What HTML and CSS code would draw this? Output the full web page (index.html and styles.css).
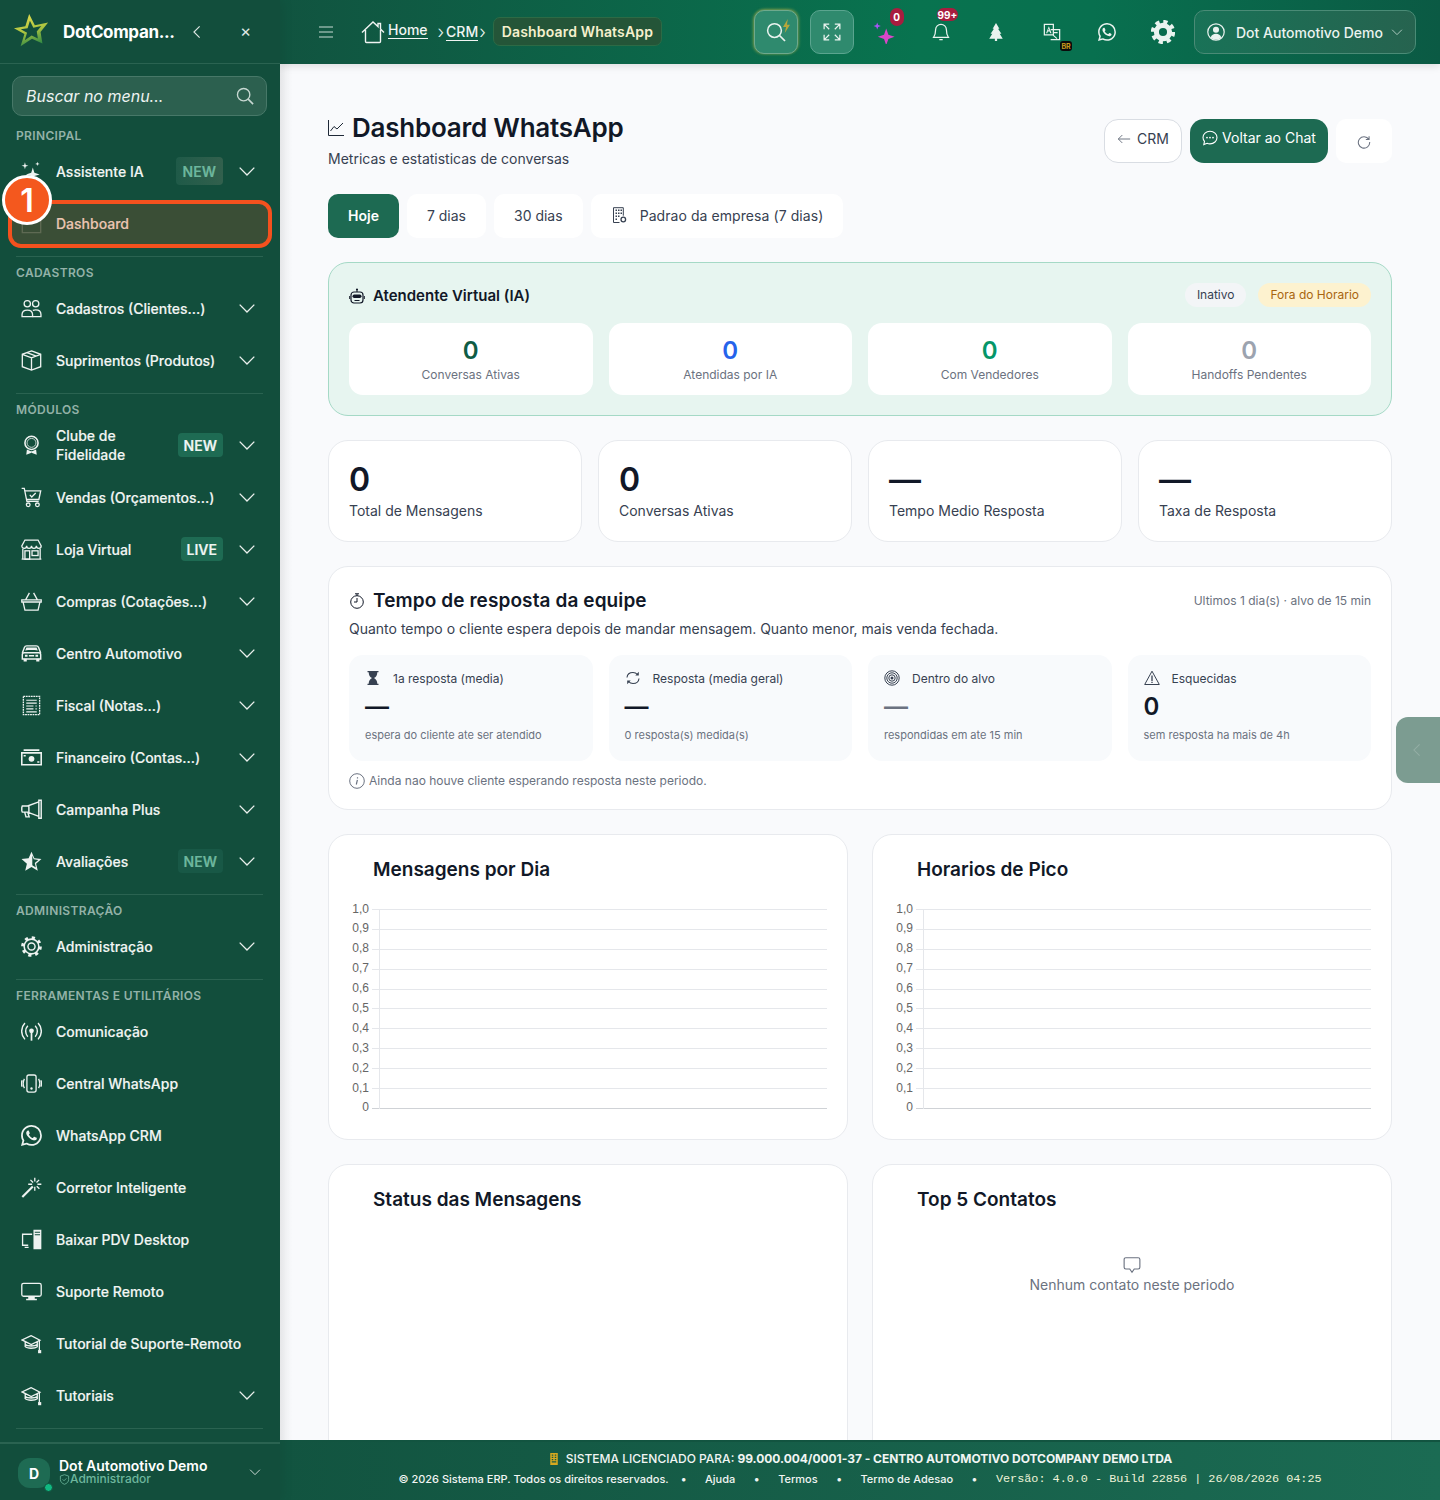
FILE: index.html
```html
<!DOCTYPE html>
<html lang="pt-BR">
<head>
<meta charset="utf-8">
<title>Dashboard WhatsApp</title>
<link rel="stylesheet" href="styles.css">
</head>
<body>
<svg class="defs" width="0" height="0" aria-hidden="true">
  <defs>
    <symbol id="chev" viewBox="0 0 16 16"><path d="M1.500 5l6.500 6.500L14.500 5" fill="none" stroke="currentColor" stroke-width="1.200"/></symbol>
    <symbol id="wa" viewBox="0 0 16 16"><path fill="currentColor" d="M13.601 2.326A7.85 7.85 0 0 0 7.994 0C3.627 0 .068 3.558.064 7.926c0 1.399.366 2.76 1.057 3.965L0 16l4.204-1.102a7.9 7.9 0 0 0 3.79.965h.004c4.368 0 7.926-3.558 7.93-7.93A7.9 7.9 0 0 0 13.6 2.326zM7.994 14.521a6.6 6.6 0 0 1-3.356-.92l-.24-.144-2.494.654.666-2.433-.156-.251a6.56 6.56 0 0 1-1.007-3.505c0-3.626 2.957-6.584 6.591-6.584a6.56 6.56 0 0 1 4.66 1.931 6.56 6.56 0 0 1 1.928 4.66c-.004 3.639-2.961 6.592-6.592 6.592m3.615-4.934c-.197-.099-1.17-.578-1.353-.646-.182-.065-.315-.099-.445.099-.133.197-.513.646-.627.775-.114.133-.232.148-.43.05-.197-.1-.836-.308-1.592-.985-.59-.525-.985-1.175-1.103-1.372-.114-.198-.011-.304.088-.403.087-.088.197-.232.296-.346.1-.114.133-.198.198-.33.065-.134.034-.248-.015-.347-.05-.099-.445-1.076-.612-1.47-.16-.389-.323-.335-.445-.34-.114-.007-.247-.007-.38-.007a.73.73 0 0 0-.529.247c-.182.198-.691.677-.691 1.654s.71 1.916.81 2.049c.098.133 1.394 2.132 3.383 2.992.47.205.84.326 1.129.418.475.152.904.129 1.246.08.38-.058 1.171-.48 1.338-.943.164-.464.164-.86.114-.943-.049-.084-.182-.133-.38-.232"/></symbol>
    <symbol id="people" viewBox="0 0 16 16"><g fill="none" stroke="currentColor" stroke-width="1"><circle cx="4.800" cy="4.400" r="2.400"/><circle cx="11.200" cy="4.400" r="2.400"/><path d="M.8 14.200v-1.600c0-2 1.600-3.400 4-3.400s4 1.400 4 3.400v1.600z"/><path d="M9 9.400c.6-.2 1.300-.3 2.200-.3 2.400 0 4 1.400 4 3.500v1.600H8.800"/></g></symbol>
    <symbol id="box" viewBox="0 0 16 16"><g fill="none" stroke="currentColor" stroke-width="1"><path d="M8 .7l7 2.600v9.400l-7 2.600-7-2.600V3.300z"/><path d="M1 3.300l7 2.600 7-2.600M8 5.900v9.400M4.600 2l7 2.600"/></g></symbol>
    <symbol id="award" viewBox="0 0 16 16"><g fill="none" stroke="currentColor" stroke-width="1.200"><circle cx="8" cy="6" r="5"/><circle cx="8" cy="6" r="3.400" stroke-width=".6"/></g><path fill="currentColor" d="M4.500 11l3 1.400 1 0 3-1.400.5 4-3.500-1.300-.5-.4-.5.4L4 15z"/></symbol>
    <symbol id="cart" viewBox="0 0 16 16"><g fill="none" stroke="currentColor" stroke-width="1"><path d="M.5 1h2l2 10h9"/><path d="M3 3h12l-1.400 6.500H4.300"/><circle cx="5.500" cy="13.600" r="1.400"/><circle cx="12.500" cy="13.600" r="1.400"/><path d="M6.700 6l1.500 1.600 3-3"/></g></symbol>
    <symbol id="shop" viewBox="0 0 16 16"><g fill="none" stroke="currentColor" stroke-width="1"><path d="M.5 15.400h15M1.400 7.400v8M14.600 7.400v8"/><path d="M3 .8h10l2.400 4.400c0 2.600-3.600 2.600-3.700 0 0 2.600-3.700 2.600-3.700 0 0 2.600-3.700 2.600-3.700 0 0 2.600-3.700 2.600-3.700 0z"/><rect x="3" y="9" width="3.600" height="6.400"/><rect x="8.400" y="9" width="4.600" height="3.600"/></g></symbol>
    <symbol id="basket" viewBox="0 0 16 16"><g fill="none" stroke="currentColor" stroke-width="1"><path d="M.6 6.800h14.800v1.600H.6zM1.600 8.400L3 14.600h10l1.400-6.200M3.600 6.600L6.400 1.400M12.400 6.600L9.600 1.400"/></g></symbol>
    <symbol id="car" viewBox="0 0 16 16"><g fill="none" stroke="currentColor" stroke-width="1.100"><path d="M1 7.600l1.600-4.200c.3-.8 1-1.200 1.700-1.200h7.400c.7 0 1.400.4 1.700 1.200L15 7.600"/><path d="M1 12.200V9c0-.9.6-1.500 1.400-1.500h11.200c.8 0 1.400.6 1.400 1.500v3.200z"/></g><path fill="currentColor" d="M3.200 5.800l.9-2.300h7.800l.9 2.300c-3-.5-6.600-.5-9.600 0zM2 12h2.400v2H2zM11.600 12H14v2h-2.400zM3 9h2v1.500H3zM11 9h2v1.500h-2zM6 9.200h4v1H6z"/></symbol>
    <symbol id="receipt" viewBox="0 0 16 16"><g fill="none" stroke="currentColor" stroke-width="1"><path d="M1.800 1h12.400v14H1.800z" stroke-dasharray="1.400 .5"/><path d="M4 4h8M4 6.200h8M4 8.400h5.500M11 8.400h1M4 10.600h5.500M11 10.600h1M4 12.800h8" stroke-width=".9"/></g></symbol>
    <symbol id="cash" viewBox="0 0 16 16"><path fill="none" stroke="currentColor" stroke-width="1.200" d="M.6 4.500h14.800v9H.6zM2 2.400h12"/><circle cx="8" cy="9" r="2.200" fill="currentColor"/><path fill="currentColor" d="M2 6h1.600v1.200H2zM12.400 10.800H14V12h-1.600z"/></symbol>
    <symbol id="mega" viewBox="0 0 16 16"><g fill="none" stroke="currentColor" stroke-width="1.100"><path d="M13.600 1h1.800v13.600h-1.800zM13.600 2.200L5 5.300H1l-.4 1.200v2.400L1 10h4l8.600 3.200M6 5v5M2.800 10l1 3.600h2.400l-1-3.400"/></g></symbol>
    <symbol id="starh" viewBox="0 0 16 16"><path fill="currentColor" d="M8 .6l2.200 5 5.400.5-4.100 3.600 1.300 5.300L8 12.200 3.200 15l1.300-5.300L.4 6.100l5.400-.5z"/><path fill="#124e3c" d="M8.600 3.500l1.100 2.800 3.500.5-2.700 2.300.8 3.500-2.700-1.700z"/></symbol>
    <symbol id="gear" viewBox="0 0 16 16"><g fill="none" stroke="currentColor"><circle cx="8" cy="8" r="2.700" stroke-width="1.100"/><circle cx="8" cy="8" r="5.600" stroke-width="1.200"/><circle cx="8" cy="8" r="6.800" stroke-width="2.200" stroke-dasharray="2.400 2.940"/></g></symbol>
    <symbol id="gearf" viewBox="0 0 16 16"><g fill="none" stroke="currentColor"><circle cx="8" cy="8" r="4.400" stroke-width="3.400"/><circle cx="8" cy="8" r="6.800" stroke-width="2.600" stroke-dasharray="2.800 2.540"/></g></symbol>
    <symbol id="broad" viewBox="0 0 16 16"><g fill="none" stroke="currentColor" stroke-width="1.100"><path d="M3 1.500C-.3 5 -.3 10.500 3 14M13 1.500c3.300 3.500 3.300 9 0 12.500M5.200 3.700C3 6 3 9.800 5.200 12M10.800 3.700c2.200 2.300 2.200 6.100 0 8.300"/></g><circle cx="8" cy="7.500" r="1.800" fill="currentColor"/><path d="M8 8v7" stroke="currentColor" stroke-width="1.300"/></symbol>
    <symbol id="phonev" viewBox="0 0 16 16"><g fill="none" stroke="currentColor" stroke-width="1"><rect x="4.500" y="1.500" width="7" height="13" rx="1.500"/><path d="M2.600 4.500C1.500 6.500 1.500 9.500 2.600 11.500M13.400 4.500c1.100 2 1.100 5 0 7M.9 5.500c-.7 1.500-.7 3.500 0 5M15.100 5.500c.7 1.500.7 3.500 0 5"/></g><circle cx="8" cy="11.800" r=".9" fill="currentColor"/></symbol>
    <symbol id="magic" viewBox="0 0 16 16"><path d="M1 15.300L9 7.300" fill="none" stroke="currentColor" stroke-width="1.600"/><path d="M10.500 .5v3M10.500 7.500v3M5.500 5.500h3M12.500 5.500h3M7.200 2.200l2 2M12 7l2 2M13.800 2.200l-2 2" fill="none" stroke="currentColor" stroke-width="1"/></symbol>
    <symbol id="pc" viewBox="0 0 16 16"><path fill="none" stroke="currentColor" d="M8.500 4H1.200v8.400h4.300M2.800 14h3"/><path fill="currentColor" fill-rule="evenodd" d="M9.500.5h6v15h-6zM10.500 2v.8h4V2zM10.500 4v.8h4V4z"/></symbol>
    <symbol id="display" viewBox="0 0 16 16"><rect x=".6" y="1.800" width="14.800" height="9.800" rx="1.400" fill="none" stroke="currentColor" stroke-width="1"/><path fill="currentColor" d="M5.500 11.800h5v1.800h1.600v1H3.900v-1h1.600z"/></symbol>
    <symbol id="grad" viewBox="0 0 16 16"><g fill="none" stroke="currentColor" stroke-width="1"><path d="M7.800 2L.8 5.300l7 3.500 6.600-3.300zM3.200 6.800v3.600c1.600 1.600 7.400 1.600 9.200 0V6.800M3.200 8.700c1.800 1.600 7.400 1.600 9.200 0"/><path d="M14 5.500v7.500"/></g><rect x="13" y="13" width="2.400" height="2.400" fill="currentColor"/></symbol>
    <symbol id="srch" viewBox="0 0 16 16"><circle cx="6.800" cy="6.800" r="5.500" fill="none" stroke="currentColor" stroke-width="1.200"/><path d="M10.800 10.800l4.400 4.400" stroke="currentColor" stroke-width="1.400" fill="none"/></symbol>
  </defs>
</svg>

<div class="app">
  <aside class="sidebar">
    <header class="brand">
      <svg class="logo" viewBox="0 0 40 40"><defs><linearGradient id="lg" x1=".2" y1="0" x2=".5" y2="1"><stop offset="0" stop-color="#e9df4f"/><stop offset=".55" stop-color="#a9c23f"/><stop offset="1" stop-color="#2f8a45"/></linearGradient></defs><path fill="url(#lg)" fill-rule="evenodd" d="M17 1l6 12 14-3-8 10 2 12-11-5-12 8 4-13L1 16l12-2zM17.800 8.200l-2.400 7.800-7.200 1.200 6.600 3.600-2.400 7.800 7.200-4.800 6.600 3-1.200-7.200 4.800-6-8.400 1.800z"/></svg>
      <span class="brand-name">DotCompan...</span>
      <svg class="brand-back" viewBox="0 0 16 16"><path d="M11 1.500L4.500 8l6.500 6.500" fill="none" stroke="currentColor" stroke-width="1.300"/></svg>
      <span class="brand-close">×</span>
    </header>

    <div class="search-wrap">
      <label class="search"><span class="search-text">Buscar no menu...</span><svg class="ic-18"><use href="#srch"/></svg></label>
    </div>

    <nav class="nav">
      <section class="group">
        <h4 class="group-label">PRINCIPAL</h4>
        <a class="item"><svg class="ic" viewBox="0 0 16 16"><path fill="currentColor" d="M9 5l1.200 4 4 1.200-4 1.200L9 15.400l-1.200-4-4-1.200 4-1.200zM3 1l.6 2 2 .6-2 .6-.6 2-.6-2-2-.6 2-.6zM12.500 .5l.4 1.300 1.300.4-1.300.4-.4 1.300-.4-1.300-1.300-.4 1.300-.4z"/></svg><span class="label">Assistente IA</span><span class="tag tag-dim tag-warm">NEW</span><svg class="chev"><use href="#chev"/></svg></a>
        <a class="item item-active"><svg class="ic ic-under" viewBox="0 0 16 16"><path fill="none" stroke="currentColor" d="M1 1h14v14H1z"/></svg><span class="label">Dashboard</span></a>
      </section>
      <section class="group">
        <h4 class="group-label">CADASTROS</h4>
        <a class="item"><svg class="ic"><use href="#people"/></svg><span class="label">Cadastros (Clientes...)</span><svg class="chev"><use href="#chev"/></svg></a>
        <a class="item"><svg class="ic"><use href="#box"/></svg><span class="label">Suprimentos (Produtos)</span><svg class="chev"><use href="#chev"/></svg></a>
      </section>
      <section class="group">
        <h4 class="group-label">MÓDULOS</h4>
        <a class="item"><svg class="ic"><use href="#award"/></svg><span class="label label-wrap">Clube de Fidelidade</span><span class="tag">NEW</span><svg class="chev"><use href="#chev"/></svg></a>
        <a class="item"><svg class="ic"><use href="#cart"/></svg><span class="label">Vendas (Orçamentos...)</span><svg class="chev"><use href="#chev"/></svg></a>
        <a class="item"><svg class="ic"><use href="#shop"/></svg><span class="label">Loja Virtual</span><span class="tag">LIVE</span><svg class="chev"><use href="#chev"/></svg></a>
        <a class="item"><svg class="ic"><use href="#basket"/></svg><span class="label">Compras (Cotações...)</span><svg class="chev"><use href="#chev"/></svg></a>
        <a class="item"><svg class="ic"><use href="#car"/></svg><span class="label">Centro Automotivo</span><svg class="chev"><use href="#chev"/></svg></a>
        <a class="item"><svg class="ic"><use href="#receipt"/></svg><span class="label">Fiscal (Notas...)</span><svg class="chev"><use href="#chev"/></svg></a>
        <a class="item"><svg class="ic"><use href="#cash"/></svg><span class="label">Financeiro (Contas...)</span><svg class="chev"><use href="#chev"/></svg></a>
        <a class="item"><svg class="ic"><use href="#mega"/></svg><span class="label">Campanha Plus</span><svg class="chev"><use href="#chev"/></svg></a>
        <a class="item"><svg class="ic"><use href="#starh"/></svg><span class="label">Avaliações</span><span class="tag tag-dim">NEW</span><svg class="chev"><use href="#chev"/></svg></a>
      </section>
      <section class="group">
        <h4 class="group-label">ADMINISTRAÇÃO</h4>
        <a class="item"><svg class="ic"><use href="#gear"/></svg><span class="label">Administração</span><svg class="chev"><use href="#chev"/></svg></a>
      </section>
      <section class="group">
        <h4 class="group-label">FERRAMENTAS E UTILITÁRIOS</h4>
        <a class="item"><svg class="ic"><use href="#broad"/></svg><span class="label">Comunicação</span></a>
        <a class="item"><svg class="ic"><use href="#phonev"/></svg><span class="label">Central WhatsApp</span></a>
        <a class="item"><svg class="ic"><use href="#wa"/></svg><span class="label">WhatsApp CRM</span></a>
        <a class="item"><svg class="ic"><use href="#magic"/></svg><span class="label">Corretor Inteligente</span></a>
        <a class="item"><svg class="ic"><use href="#pc"/></svg><span class="label">Baixar PDV Desktop</span></a>
        <a class="item"><svg class="ic"><use href="#display"/></svg><span class="label">Suporte Remoto</span></a>
        <a class="item"><svg class="ic"><use href="#grad"/></svg><span class="label">Tutorial de Suporte-Remoto</span></a>
        <a class="item"><svg class="ic"><use href="#grad"/></svg><span class="label">Tutoriais</span><svg class="chev"><use href="#chev"/></svg></a>
      </section>
    </nav>

    <footer class="me">
      <span class="avatar">D<i class="dot"></i></span>
      <span class="me-text">
        <b class="me-name">Dot Automotivo Demo</b>
        <span class="me-role"><svg class="ic-12" viewBox="0 0 16 16"><path d="M8 1l6 2v5c0 3.500-2.500 5.700-6 7-3.500-1.300-6-3.500-6-7V3z M5.300 7.800l2 2 3.400-3.400" fill="none" stroke="currentColor" stroke-width="1.200"/></svg>Administrador</span>
      </span>
      <svg class="me-chev"><use href="#chev"/></svg>
    </footer>

    <div class="tour-ring"></div>
    <div class="tour-num">1</div>
  </aside>

  <main class="main">
    <header class="topbar">
      <svg class="burger" viewBox="0 0 14 12"><path d="M0 1h14M0 6h14M0 11h14" stroke="currentColor" stroke-width="1.200" fill="none"/></svg>
      <nav class="crumbs">
        <svg class="home" viewBox="0 0 24 24"><path d="M1 12.500L12 2l5 4.600V3.500h2.500v5.400L23 12.500M4.500 10v11.500c0 .5.400 1 1 1h13c.6 0 1-.5 1-1V10" fill="none" stroke="currentColor" stroke-width="1.400"/></svg>
        <a class="crumb crumb-home">Home</a>
        <span class="sep sep-a">›</span>
        <a class="crumb">CRM</a>
        <span class="sep">›</span>
        <span class="crumb-now">Dashboard WhatsApp</span>
      </nav>
      <div class="actions">
        <button class="sq sq-glow"><svg class="ic-20"><use href="#srch"/></svg><svg class="bolt" viewBox="0 0 10 16"><path fill="#b8a63a" d="M6.500 0L1 9h3.500L3 16l6-9.500H5.500z"/></svg></button>
        <button class="sq"><svg class="ic-18" viewBox="0 0 16 16"><path d="M1 5.500V1h4.500M1 1l4.500 4.500M15 5.500V1h-4.500M15 1l-4.500 4.500M1 10.500V15h4.500M1 15l4.500-4.500M15 10.500V15h-4.500M15 15l-4.500-4.500" fill="none" stroke="currentColor" stroke-width="1.100"/></svg></button>
        <span class="tool"><svg class="ic-24" viewBox="0 0 20 20"><path fill="#d946c8" d="M11 7l1.800 5.200 5.200 1.800-5.200 1.800L11 21l-1.800-5.200L4 14l5.200-1.800z"/><path fill="#a855f7" d="M3.500 2l.8 2.200 2.200.8-2.200.8-.8 2.200-.8-2.200L.5 5l2.200-.8z"/></svg><b class="badge badge-a">0</b></span>
        <span class="tool"><svg class="ic-18" viewBox="0 0 16 16"><path d="M8 1.200a4.800 4.800 0 0 0-4.800 4.800c0 3.500-.9 5.500-1.800 6.700h13.200c-.9-1.200-1.800-3.200-1.800-6.700A4.800 4.800 0 0 0 8 1.200zM6.500 14.800h3" fill="none" stroke="currentColor" stroke-width="1.100"/></svg><b class="badge badge-b">99+</b></span>
        <span class="tool"><svg class="ic-18" viewBox="0 0 16 16"><path fill="currentColor" d="M8 0l3 5H9.800l3 4.500h-1.500L14 14H9v2H7v-2H2l2.700-4.500H3.200l3-4.500H5z"/></svg></span>
        <span class="tool"><svg class="ic-18" viewBox="0 0 16 16"><path fill="none" stroke="currentColor" stroke-width="1.100" d="M1.200 1.200h8v9.300h-8zM6.800 5.800h8v9h-8"/><path fill="currentColor" d="M5.200 2.800L7.600 9H6.400l-.5-1.400H4.300L3.800 9H2.700zM4.600 6.500h1L5.100 4.800zM9 8h4v1h-4zM9.300 10.500l3.500 3-.7.700-3.500-3z"/></svg><b class="badge badge-br">BR</b></span>
        <span class="tool"><svg class="ic-18"><use href="#wa"/></svg></span>
        <span class="tool"><svg class="ic-24"><use href="#gearf"/></svg></span>
      </div>
      <button class="userbtn">
        <svg class="ic-18" viewBox="0 0 16 16"><circle cx="8" cy="8" r="7.300" fill="none" stroke="currentColor" stroke-width="1.100"/><circle cx="8" cy="6" r="2.700" fill="currentColor"/><path fill="currentColor" d="M3.300 12.800c.6-2.200 2.500-3.300 4.700-3.300s4.100 1.100 4.700 3.300C11.500 14 9.800 14.700 8 14.700s-3.500-.7-4.700-1.900z"/></svg>
        <span>Dot Automotivo Demo</span>
        <svg class="ic-12 dim"><use href="#chev"/></svg>
      </button>
    </header>

    <div class="content">
      <section class="pagehead">
        <div class="pagehead-text">
          <h1 class="title"><svg class="title-ic" viewBox="0 0 16 16"><path d="M.5 0v15.500H16M2.500 11l3.500-4.500 3 2.500L15 3" fill="none" stroke="currentColor" stroke-width="1"/></svg>Dashboard WhatsApp</h1>
          <p class="subtitle">Metricas e estatisticas de conversas</p>
        </div>
        <div class="head-actions">
          <button class="btn-outline"><svg class="ic-14" viewBox="0 0 16 16"><path d="M15 8H1.500M6 3.500L1.500 8 6 12.500" fill="none" stroke="#6b7280" stroke-width="1.100"/></svg>CRM</button>
          <button class="btn-green"><svg class="ic-16" viewBox="0 0 16 16"><path d="M8 1.200c-4 0-7 2.800-7 6.300 0 1.500.6 2.800 1.500 3.800L1.800 14.600l3.300-1.300c.9.400 1.900.6 2.900.6 4 0 7-2.900 7-6.400S12 1.200 8 1.200z" fill="none" stroke="currentColor" stroke-width="1.100"/><circle cx="5" cy="7.600" r=".9" fill="currentColor"/><circle cx="8" cy="7.600" r=".9" fill="currentColor"/><circle cx="11" cy="7.600" r=".9" fill="currentColor"/></svg>Voltar ao Chat</button>
          <button class="btn-white"><svg class="ic-14" viewBox="0 0 16 16"><path d="M13.500 5A6.500 6.500 0 1 0 14.500 8M13.800 1.500V5.200h-3.700" fill="none" stroke="#6b7280" stroke-width="1.200"/></svg></button>
        </div>
      </section>

      <div class="tabs">
        <button class="tab tab-on">Hoje</button>
        <button class="tab">7 dias</button>
        <button class="tab">30 dias</button>
        <button class="tab tab-wide"><svg class="ic-16" viewBox="0 0 16 16"><g fill="none" stroke="currentColor"><path d="M2.500 15.500V.7h9.800v8M2.500 15.500h6"/><circle cx="12.300" cy="12.500" r="2.300" stroke-width="1.300"/></g><path fill="currentColor" d="M4.500 2.500h1.500V4H4.500zM7 2.500h1.500V4H7zM9.500 2.500H11V4H9.500zM4.500 5.500h1.500V7H4.500zM7 5.500h1.500V7H7zM9.500 5.500H11V7H9.500zM4.500 8.500h1.500V10H4.500zM7 8.500h1.500V10H7zM4.500 11.500h1.500V13H4.500z"/></svg>Padrao da empresa (7 dias)</button>
      </div>

      <section class="ai">
        <div class="ai-head">
          <h3 class="ai-title"><svg class="ic-16" viewBox="0 0 16 16"><path fill="currentColor" d="M8 .5a1 1 0 0 1 .5 1.900V4h-1V2.400A1 1 0 0 1 8 .5z"/><rect x="2" y="4" width="12" height="11" rx="3" fill="none" stroke="currentColor" stroke-width="1.200"/><rect x="3.500" y="6.500" width="9" height="3.500" rx="1.700" fill="currentColor"/><path d="M5.500 12.500h5M0.700 8v3M15.300 8v3" stroke="currentColor" fill="none"/></svg>Atendente Virtual (IA)</h3>
          <div class="ai-pills"><span class="pill">Inativo</span><span class="pill pill-warn">Fora do Horario</span></div>
        </div>
        <div class="ai-grid">
          <div class="ai-cell"><b class="ai-num c-green">0</b><span>Conversas Ativas</span></div>
          <div class="ai-cell"><b class="ai-num c-blue">0</b><span>Atendidas por IA</span></div>
          <div class="ai-cell"><b class="ai-num c-teal">0</b><span>Com Vendedores</span></div>
          <div class="ai-cell"><b class="ai-num c-gray">0</b><span>Handoffs Pendentes</span></div>
        </div>
      </section>

      <section class="stats">
        <div class="stat"><b class="stat-num">0</b><span>Total de Mensagens</span></div>
        <div class="stat"><b class="stat-num">0</b><span>Conversas Ativas</span></div>
        <div class="stat"><b class="stat-num">—</b><span>Tempo Medio Resposta</span></div>
        <div class="stat"><b class="stat-num">—</b><span>Taxa de Resposta</span></div>
      </section>

      <section class="resp">
        <div class="resp-head">
          <h3 class="resp-title"><svg class="ic-16" viewBox="0 0 16 16"><g fill="none" stroke="currentColor" stroke-width="1"><circle cx="8" cy="9" r="6.300"/><path d="M8 5v4H5M6 .8h4M8 .8v2"/></g></svg>Tempo de resposta da equipe</h3>
          <span class="resp-meta">Ultimos 1 dia(s) · alvo de 15 min</span>
        </div>
        <p class="resp-desc">Quanto tempo o cliente espera depois de mandar mensagem. Quanto menor, mais venda fechada.</p>
        <div class="resp-grid">
          <div class="rc">
            <div class="rc-top"><svg class="ic-16" viewBox="0 0 16 16"><path fill="currentColor" d="M2.500 1h11v1.200h-1.200c0 3-1.300 4.800-3.300 5.800 2 1 3.300 2.800 3.300 5.800h1.200V15h-11v-1.200h1.200c0-3 1.300-4.800 3.300-5.800-2-1-3.300-2.800-3.300-5.800H2.500z"/></svg>1a resposta (media)</div>
            <b class="rc-num">—</b><span class="rc-note">espera do cliente ate ser atendido</span>
          </div>
          <div class="rc">
            <div class="rc-top"><svg class="ic-16" viewBox="0 0 16 16"><path d="M2 7.500C2.300 4.500 4.800 2.500 8 2.500c1.800 0 3.300.7 4.500 2M14 8.500c-.3 3-2.800 5-6 5-1.800 0-3.300-.7-4.500-2" fill="none" stroke="currentColor" stroke-width="1.100"/><path fill="currentColor" d="M13.800 1.800v3.700h-3.500zM2.200 14.200v-3.700h3.500z"/></svg>Resposta (media geral)</div>
            <b class="rc-num">—</b><span class="rc-note">0 resposta(s) medida(s)</span>
          </div>
          <div class="rc">
            <div class="rc-top"><svg class="ic-16" viewBox="0 0 16 16"><g fill="none" stroke="currentColor"><circle cx="8" cy="8" r="7.200"/><circle cx="8" cy="8" r="5.200"/><circle cx="8" cy="8" r="3.200"/></g><circle cx="8" cy="8" r="1.500" fill="currentColor"/></svg>Dentro do alvo</div>
            <b class="rc-num rc-muted">—</b><span class="rc-note">respondidas em ate 15 min</span>
          </div>
          <div class="rc">
            <div class="rc-top"><svg class="ic-16" viewBox="0 0 16 16"><path d="M8 1.200L.7 14.500h14.600z" fill="none" stroke="currentColor" stroke-width="1"/><path d="M8 5.500v5.500M8 11.800v1.300" stroke="currentColor" stroke-width="1.300" fill="none"/></svg>Esquecidas</div>
            <b class="rc-num">0</b><span class="rc-note">sem resposta ha mais de 4h</span>
          </div>
        </div>
        <p class="resp-foot"><svg class="ic-16" viewBox="0 0 16 16"><circle cx="8" cy="8" r="7.300" fill="none" stroke="currentColor"/><path d="M8.400 6.800L7.300 11.500M8.500 4.200v1.300" stroke="currentColor" stroke-width="1.200" fill="none"/></svg>Ainda nao houve cliente esperando resposta neste periodo.</p>
      </section>

      <section class="charts">
        <article class="panel">
          <h3 class="panel-title">Mensagens por Dia</h3>
          <div class="chart">
            <div class="gl"><span>1,0</span><i></i></div><div class="gl"><span>0,9</span><i></i></div><div class="gl"><span>0,8</span><i></i></div><div class="gl"><span>0,7</span><i></i></div><div class="gl"><span>0,6</span><i></i></div><div class="gl"><span>0,5</span><i></i></div><div class="gl"><span>0,4</span><i></i></div><div class="gl"><span>0,3</span><i></i></div><div class="gl"><span>0,2</span><i></i></div><div class="gl"><span>0,1</span><i></i></div><div class="gl"><span>0</span><i></i></div>
          </div>
        </article>
        <article class="panel">
          <h3 class="panel-title">Horarios de Pico</h3>
          <div class="chart">
            <div class="gl"><span>1,0</span><i></i></div><div class="gl"><span>0,9</span><i></i></div><div class="gl"><span>0,8</span><i></i></div><div class="gl"><span>0,7</span><i></i></div><div class="gl"><span>0,6</span><i></i></div><div class="gl"><span>0,5</span><i></i></div><div class="gl"><span>0,4</span><i></i></div><div class="gl"><span>0,3</span><i></i></div><div class="gl"><span>0,2</span><i></i></div><div class="gl"><span>0,1</span><i></i></div><div class="gl"><span>0</span><i></i></div>
          </div>
        </article>
        <article class="panel panel-tall">
          <h3 class="panel-title">Status das Mensagens</h3>
        </article>
        <article class="panel panel-tall">
          <h3 class="panel-title">Top 5 Contatos</h3>
          <div class="empty"><svg class="ic-18" viewBox="0 0 16 16"><path d="M2.500 1.500h11a1.500 1.500 0 0 1 1.500 1.500v7a1.500 1.500 0 0 1-1.500 1.500H10L8 14.500 6 11.500H2.500A1.500 1.500 0 0 1 1 10V3a1.500 1.500 0 0 1 1.500-1.500z" fill="none" stroke="currentColor" stroke-width="1"/></svg><span>Nenhum contato neste periodo</span></div>
        </article>
      </section>
    </div>

    <footer class="footer">
      <p class="foot-1"><svg class="ic-12 gold" viewBox="0 0 12 16"><path fill="currentColor" fill-rule="evenodd" d="M1 0h10v16H1zM3 2v1.500h2V2zM7 2v1.500h2V2zM3 5v1.500h2V5zM7 5v1.500h2V5zM3 8v1.500h2V8zM7 8v1.500h2V8zM3 11v1.500h6V11z"/></svg><span>SISTEMA LICENCIADO PARA: <b>99.000.004/0001-37 - CENTRO AUTOMOTIVO DOTCOMPANY DEMO LTDA</b></span></p>
      <p class="foot-2"><span class="foot-copy">© 2026 Sistema ERP. Todos os direitos reservados.</span><i>•</i><a>Ajuda</a><i>•</i><a>Termos</a><i>•</i><a>Termo de Adesao</a><i>•</i><code>Versão: 4.0.0 - Build 22856 | 26/08/2026 04:25</code></p>
    </footer>

    <button class="side-tab"><svg class="ic-14" viewBox="0 0 16 16"><path d="M11 1.500L4.500 8l6.500 6.500" fill="none" stroke="#94aea5" stroke-width="1.200"/></svg></button>
  </main>
</div>
</body>
</html>
```

FILE: styles.css
```css
* { box-sizing: border-box; }
html, body { margin: 0; padding: 0; }
body { font-family: Inter, "Liberation Sans", sans-serif; color: #111827; background: #f9fafc; }
h1, h3, h4, p { margin: 0; }
button { font: inherit; border: 0; padding: 0; background: none; color: inherit; }
svg { display: block; flex: none; }
.defs { position: absolute; }

.ic-12 { width: 12px; height: 12px; }
.ic-14 { width: 14px; height: 14px; }
.ic-16 { width: 16px; height: 16px; }
.ic-18 { width: 18px; height: 18px; }
.ic-20 { width: 20px; height: 20px; }
.ic-24 { width: 24px; height: 24px; }
.dim { color: #b8d0c7; }

.app { display: flex; width: 1440px; height: 1500px; overflow: hidden; }

/* sidebar */
.sidebar { position: relative; z-index: 3; width: 280px; flex: none; display: flex; flex-direction: column; background: #124e3c; color: #f1f5f3; box-shadow: 2px 0 12px rgba(0,0,0,.08); }
.brand { height: 64px; flex: none; display: flex; align-items: center; padding: 0 0 0 13px; border-bottom: 1px solid #2a6351; }
.logo { width: 38px; height: 38px; }
.brand-name { margin-left: 12px; width: 111px; font-size: 17px; font-weight: 700; color: #fff; white-space: nowrap; letter-spacing: -.35px; }
.brand-back { width: 14px; height: 14px; margin-left: 16px; color: #dfe8e4; }
.brand-close { margin-left: 36px; font-size: 17px; line-height: 1; color: #dfe8e4; }

.search-wrap { flex: none; padding: 12px 13px 4px 12px; }
.search { height: 40px; display: flex; align-items: center; justify-content: space-between; padding: 0 12px 0 13px; background: #2c604f; border: 1px solid #477868; border-radius: 10px; color: #c8d8d2; }
.search-text { font-size: 16px; font-style: italic; color: #eef3f1; }

.nav { flex: 1; min-height: 0; }
.group { padding-bottom: 7px; margin: 0 17px 0 16px; border-bottom: 1px solid #2a6351; }
.group-label { padding: 8px 0 2px; font-size: 12px; line-height: 15px; font-weight: 600; letter-spacing: .35px; color: #93b2a8; }
.item { display: flex; align-items: center; height: 52px; margin: 0 -4px 0 0; padding: 0 11px 0 5px; font-size: 14px; font-weight: 500; color: #f1f5f3; -webkit-text-stroke: .15px currentColor; }
.ic { width: 21px; height: 21px; flex: none; color: #eef3f1; }
.label { margin-left: 14px; flex: 1; min-width: 0; white-space: nowrap; }
.label-wrap { white-space: normal; line-height: 19px; padding-right: 40px; }
.tag { flex: none; height: 24px; padding: 0 6px; margin-right: 15px; display: flex; align-items: center; border-radius: 4px; background: #1e6b53; color: #eef5f2; font-size: 14px; font-weight: 600; }
.tag-dim { background: #185846; color: #6db69d; }
.tag-warm { height: 28px; padding: 0 7px; background: linear-gradient(90deg, #1f5a48, #32604d); }
.chev { width: 18px; height: 18px; flex: none; color: #eaf0ed; }
.item-active { height: 44px; margin: 4px -4px 4px 0; color: #e9ded2; }
.ic-under { opacity: .2; }

.me { flex: none; height: 58px; display: flex; align-items: center; padding: 0 19px 0 18px; border-top: 2px solid #2a6351; }
.avatar { position: relative; width: 32px; height: 30px; margin-top: 2px; display: flex; align-items: center; justify-content: center; border-radius: 12px; background: #1e6b53; color: #fff; font-size: 14px; font-weight: 700; }
.dot { position: absolute; right: -3px; bottom: -4px; width: 7px; height: 7px; border-radius: 50%; background: #10b981; border: 1px solid #124e3c; box-sizing: content-box; }
.me-text { flex: 1; margin-left: 9px; display: flex; flex-direction: column; }
.me-name { font-size: 14px; line-height: 14px; font-weight: 600; color: #fff; white-space: nowrap; }
.me-role { display: flex; align-items: center; font-size: 12px; line-height: 12px; font-weight: 500; color: #6db69d; }
.me-role svg { width: 11px; height: 11px; }
.me-chev { width: 12px; height: 12px; color: #dfe8e4; }

.tour-ring { position: absolute; left: 8px; top: 200px; width: 264px; height: 48px; border: 4px solid #f4511e; border-radius: 13px; background: rgba(244,81,30,.18); pointer-events: none; }
.tour-num { position: absolute; left: 2px; top: 175px; width: 50px; height: 50px; display: flex; align-items: center; justify-content: center; border-radius: 50%; background: #f4581e; border: 3px solid #fff; color: #fff; font-size: 32px; font-weight: 600; }

/* main */
.main { position: relative; flex: 1; min-width: 0; display: flex; flex-direction: column; }
.topbar { flex: none; height: 64px; display: flex; align-items: center; padding: 0 24px 0 39px; color: #eaf3ef; background: linear-gradient(90deg, #115440 0%, #08734f 55%, #08704f 70%, #0b5a44 100%); box-shadow: 0 2px 8px rgba(0,0,0,.12); position: relative; z-index: 2; }
.burger { width: 14px; height: 12px; color: #c9dcd5; }
.crumbs { display: flex; align-items: center; margin: -1px 0 0 28px; }
.home { width: 24px; height: 24px; color: #f0f4f2; }
.crumb { font-size: 14px; font-weight: 500; color: #f1f5f3; border-bottom: 1px solid #f1f5f3; line-height: 17px; }
.crumb-home { margin: -3px 0 0 3px; }
.sep { margin: 0 0 0 1px; font-size: 18px; line-height: 1; font-weight: 300; color: #eaf3ef; }
.sep-a { margin: 0 2px 0 10px; }
.crumb-now { margin-left: 7px; height: 29px; padding: 0 8px; display: flex; align-items: center; border-radius: 7px; background: #245538; border: 1px solid #2d6a45; color: #f5f0cd; font-size: 14px; font-weight: 600; letter-spacing: .16px; }
.actions { margin-left: auto; display: flex; align-items: center; }
.sq { position: relative; width: 44px; height: 44px; display: flex; align-items: center; justify-content: center; border-radius: 10px; background: #2f8a6e; border: 1px solid #5aa58f; color: #eaf3ef; margin-right: 3.500px; }
.sq-glow { margin-right: 12px; border-color: #6ea98d; box-shadow: -1px 0 3px rgba(206,192,80,.5), 1px -1px 3px rgba(206,192,80,.4); }
.bolt { position: absolute; right: 6px; top: 8px; width: 9px; height: 14px; }
.tool { position: relative; width: 55.500px; height: 44px; display: flex; align-items: center; justify-content: center; color: #eaf3ef; }
.badge { position: absolute; font-size: 10px; line-height: 1; font-weight: 700; color: #fff; background: #a81d3f; display: flex; align-items: center; justify-content: center; }
.badge-a { left: 32px; top: -2px; width: 14px; height: 18px; border-radius: 8px; }
.badge-b { left: 24px; top: -2px; width: 21px; height: 13px; border-radius: 7px; }
.badge-br { left: 36px; top: 31px; width: 12px; height: 10px; font-size: 7px; background: #0b0b0b; color: #c99b1e; border-radius: 3px; }
.userbtn { margin-left: 3.500px; width: 222px; height: 44px; display: flex; align-items: center; gap: 11px; padding: 0 12px 0 12px; border-radius: 10px; background: linear-gradient(90deg, #197257, #26634f); border: 1px solid #4a8b76; color: #eaf3ef; font-size: 14px; font-weight: 500; }
.userbtn span { white-space: nowrap; }
.userbtn .dim { margin-left: -3px; }

.content { flex: 1; min-height: 0; overflow: hidden; padding: 55px 48px 0; background: linear-gradient(90deg, #f1f2f4 0, #f9fafc 12px); }

.pagehead { display: flex; justify-content: space-between; }
.title { display: flex; align-items: center; height: 18px; font-size: 26px; line-height: 18px; font-weight: 600; color: #111827; letter-spacing: -.23px; }
.title-ic { width: 16px; height: 16px; margin-right: 8px; color: #1f2937; }
.subtitle { margin-top: 13px; font-size: 14px; line-height: 18px; color: #374151; }
.head-actions { display: flex; gap: 8px; }
.btn-outline { width: 78px; height: 44px; display: flex; align-items: center; justify-content: center; gap: 6px; padding-bottom: 5px; background: #fff; border: 1px solid #d9dde3; border-radius: 14px; color: #374151; font-size: 14px; }
.btn-green { width: 138px; height: 44px; display: flex; align-items: center; justify-content: center; gap: 4px; padding-bottom: 7px; background: #1d6a52; border-radius: 14px; color: #fff; font-size: 14px; }
.btn-white { width: 56px; height: 44px; display: flex; align-items: center; justify-content: center; padding-top: 1px; background: #fff; border-radius: 10px; }

.tabs { margin-top: 26px; display: flex; gap: 8px; }
.tab { height: 44px; padding: 0 20px 2px; background: #fff; border-radius: 10px; color: #374151; font-size: 14px; display: flex; align-items: center; }
.tab-on { background: #1d6a52; color: #fff; font-weight: 600; }
.tab-wide { gap: 13px; letter-spacing: .07px; }

.ai { margin-top: 24px; height: 154px; padding: 0 20px; background: #e7f5f0; border: 1px solid #a5d9c6; border-radius: 20px; }
.ai-head { height: 60px; display: flex; justify-content: space-between; align-items: center; padding-top: 3px; }
.ai-title { display: flex; align-items: center; gap: 8px; font-size: 15px; font-weight: 600; color: #111827; margin-top: 2px; }
.ai-pills { display: flex; gap: 12px; }
.pill { padding: 0 12px; height: 24px; display: flex; align-items: center; border-radius: 12px; font-size: 12px; color: #374151; background: #f3f5f7; }
.pill-warn { background: #fdf2cf; color: #a8650f; }
.ai-grid { display: grid; grid-template-columns: repeat(4, 1fr); gap: 16px; }
.ai-cell { height: 72px; display: flex; flex-direction: column; align-items: center; padding-top: 13px; background: #fff; border-radius: 14px; font-size: 12px; color: #6b7280; }
.ai-num { font-size: 24px; line-height: 30px; font-weight: 600; margin-bottom: 1px; }
.c-green { color: #0f5c45; }
.c-blue { color: #2563eb; }
.c-teal { color: #059669; }
.c-gray { color: #9ca3af; }

.stats { margin-top: 24px; display: grid; grid-template-columns: repeat(4, 1fr); gap: 16px; }
.stat { height: 102px; padding: 19px 20px 0; display: flex; flex-direction: column; background: #fff; border: 1px solid #e8eaee; border-radius: 20px; font-size: 14px; color: #374151; }
.stat-num { font-size: 32px; line-height: 40px; font-weight: 600; color: #111827; margin-bottom: 2px; height: 40px; }

.resp { margin-top: 24px; height: 244px; padding: 0 20px; background: #fff; border: 1px solid #e8eaee; border-radius: 20px; }
.resp-head { height: 50px; display: flex; justify-content: space-between; align-items: center; padding-top: 17px; }
.resp-title { display: flex; align-items: center; gap: 8px; font-size: 19px; font-weight: 600; color: #111827; letter-spacing: .1px; }
.resp-meta { font-size: 12px; color: #6b7280; }
.resp-desc { margin-top: 2px; font-size: 14px; line-height: 20px; color: #374151; }
.resp-grid { margin-top: 16px; display: grid; grid-template-columns: repeat(4, 1fr); gap: 16px; }
.rc { height: 106px; padding: 14px 16px 0; display: flex; flex-direction: column; background: #f8fafc; border-radius: 14px; }
.rc-top { display: flex; align-items: center; gap: 12px; height: 18px; font-size: 12px; color: #374151; }
.rc-num { padding-top: 3px; font-size: 24px; line-height: 34px; height: 37px; font-weight: 600; color: #111827; }
.rc-muted { color: #6b7280; }
.rc-note { margin-top: 3px; font-size: 11px; line-height: 16px; color: #6b7280; }
.resp-foot { margin-top: 12px; display: flex; align-items: center; gap: 4px; font-size: 12px; line-height: 16px; color: #6b7280; }

.charts { margin-top: 24px; display: grid; grid-template-columns: 1fr 1fr; gap: 24px; }
.panel { height: 306px; padding: 0 20px 0 44px; background: #fff; border: 1px solid #e8eaee; border-radius: 20px; }
.panel-tall { height: 400px; }
.panel-title { padding-top: 23px; font-size: 19px; line-height: 24px; font-weight: 600; color: #111827; }
.chart { position: relative; margin-top: 27px; margin-left: -24px; height: 200px; display: flex; flex-direction: column; justify-content: space-between; }
.chart::before { content: ""; position: absolute; left: 30px; top: 0; bottom: 0; width: 1px; background: #e5e7eb; }
.gl { height: 1px; display: flex; align-items: center; }
.gl span { width: 20px; margin-bottom: 2px; font-family: "Liberation Sans", Arial, sans-serif; font-size: 12px; color: #666; text-align: right; flex: none; }
.gl i { flex: 1; margin-left: 3px; height: 1px; background: #e5e7eb; }
.gl:last-child i { background: #cfd2d6; }
.empty { margin-top: 44px; margin-left: -24px; display: flex; flex-direction: column; align-items: center; gap: 2px; font-size: 14px; color: #6b7280; }

.footer { flex: none; height: 60px; padding-top: 9px; background: linear-gradient(90deg, #125440, #1b6b53); border-top: 2px solid #125440; color: #f1f5f3; text-align: center; position: relative; z-index: 2; }
.foot-1 { display: flex; justify-content: center; align-items: center; gap: 6px; font-size: 12px; line-height: 16px; font-weight: 500; white-space: nowrap; }
.foot-1 b { font-weight: 700; letter-spacing: -.04px; }
.gold { color: #d6a91f; }
.foot-2 { margin-top: 4px; display: flex; justify-content: center; align-items: center; gap: 13px; font-size: 11px; line-height: 16px; font-weight: 500; white-space: nowrap; }
.foot-2 i { font-style: normal; margin: 0 2px; }
.foot-2 a { margin: 0 3.500px; }
.foot-copy { margin-right: -3px; }
.foot-2 code { margin-left: 3.500px; font-family: "Liberation Mono", monospace; font-size: 11.800px; font-weight: 400; color: #eef3d8; }

.side-tab { position: absolute; right: 0; top: 717px; width: 44px; height: 66px; padding-left: 14px; display: flex; align-items: center; background: #7c9c91; border-radius: 12px 0 0 12px; }
```
